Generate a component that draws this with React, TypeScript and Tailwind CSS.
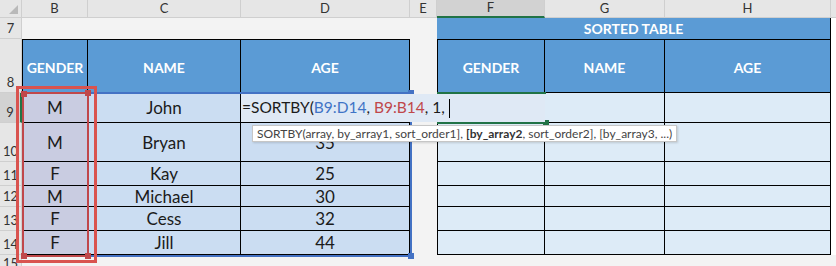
import React from "react";

const COLS = ["B", "C", "D", "E", "F", "G", "H"];

const data = [
  ["M", "John", ""],
  ["M", "Bryan", "35"],
  ["F", "Kay", "25"],
  ["M", "Michael", "30"],
  ["F", "Cess", "32"],
  ["F", "Jill", "44"],
];

const font = { fontFamily: "Lato, 'Open Sans', sans-serif" };

function Handle({ className }: { className: string }) {
  return <div className={"absolute h-[6px] w-[6px] " + className} />;
}

export default function App() {
  return (
    <div className="relative h-[266px] w-[836px] overflow-hidden bg-[#f3f3f3]" style={font}>
      <div className="grid grid-cols-[22px_66px_153px_169px_27px_108px_120px_166px_1fr] grid-rows-[18px_21px_54px_30px_39px_24px_21px_24px_24px_1fr]">
        {/* column letters */}
        <div className="relative border-b border-r border-[#cfcfcf] bg-[#e6e6e6]">
          <div className="absolute bottom-[3px] right-[3px] h-0 w-0 border-b-[9px] border-l-[9px] border-b-[#b9b9b9] border-l-transparent" />
        </div>
        {COLS.map((c) => (
          <div
            key={c}
            className={
              c === "F"
                ? "flex items-center justify-center border-b-2 border-r border-b-[#217346] border-r-[#cfcfcf] bg-[#d2d2d2] text-[13px] text-[#333]"
                : "flex items-center justify-center border-b border-r border-[#cfcfcf] bg-[#e6e6e6] text-[13px] text-[#333]"
            }
          >
            {c}
          </div>
        ))}
        <div className="border-b border-[#cfcfcf] bg-[#e6e6e6]" />

        {/* row 7 */}
        <RowHead n={7} />
        <div className="col-span-4" />
        <div className="col-span-3 flex items-center justify-center border-r border-black bg-[#5b9bd5] text-[14px] font-bold text-white">
          SORTED TABLE
        </div>
        <div className="bg-white" />

        {/* row 8 headers */}
        <RowHead n={8} />
        {["GENDER", "NAME", "AGE"].map((t, i) => (
          <div
            key={"l" + t}
            className={
              "flex items-center justify-center border-b border-r border-t border-black bg-[#5b9bd5] pt-[2px] text-[14px] font-bold text-white " +
              (i === 0 ? "border-l" : "")
            }
          >
            {t}
          </div>
        ))}
        <div />
        {["GENDER", "NAME", "AGE"].map((t, i) => (
          <div
            key={"r" + t}
            className={
              "flex items-center justify-center border-b border-r border-t border-black bg-[#5b9bd5] pt-[2px] text-[14px] font-bold text-white " +
              (i === 0 ? "border-l" : "")
            }
          >
            {t}
          </div>
        ))}
        <div className="bg-white" />

        {/* data rows */}
        {data.map((r, ri) => (
          <React.Fragment key={ri}>
            <RowHead n={9 + ri} active={ri === 0} />
            {r.map((v, ci) => (
              <div
                key={ci}
                className={
                  "flex items-center justify-center border-b border-r border-black text-[17px] leading-none text-[#1b1b1b] " +
                  (ci === 0 ? "border-l bg-[#c9cce1] " : "bg-[#cbddf2] ")
                }
              >
                {v}
              </div>
            ))}
            <div />
            {[0, 1, 2].map((k) => (
              <div
                key={"e" + k}
                className={
                  "border-b border-r border-black bg-[#ddebf7] " + (k === 0 ? "border-l" : "")
                }
              />
            ))}
            <div className="bg-white" />
          </React.Fragment>
        ))}

        {/* row 15 */}
        <RowHead n={15} />
        <div className="col-span-8" />
      </div>

      {/* active cell F9 */}
      <div className="absolute left-[437px] top-[92px] h-[32px] w-[109px] border-b-2 border-t-2 border-[#217346]">
        <Handle className="-bottom-[4px] -right-[3px] bg-[#217346]" />
      </div>

      {/* blue reference B9:D14 */}
      <div className="absolute left-[22px] top-[92px] h-[165px] w-[390px] border-2 border-[#4472c4]">
        <Handle className="-right-[4px] -top-[4px] bg-[#4472c4]" />
        <Handle className="-bottom-[4px] -right-[4px] bg-[#4472c4]" />
      </div>

      {/* editing box over D9:F9 */}
      <div className="absolute left-[241px] top-[94px] flex h-[28px] w-[304px] items-center bg-[#dfe9f5] pl-[1px] text-[15.5px] leading-none text-[#1b1b1b]">
        <span>=SORTBY(</span>
        <span className="text-[#3f74c6]">B9:D14</span>
        <span className="whitespace-pre">, </span>
        <span className="text-[#c0474a]">B9:B14</span>
        <span className="whitespace-pre">, 1, </span>
        <span className="h-[19px] w-px bg-black" />
      </div>

      {/* red reference B9:B14 */}
      <div className="absolute left-[22px] top-[92px] h-[165px] w-[67px] border-2 border-[#c0474a]">
        <Handle className="-left-[3px] -top-[3px] bg-[#c0474a]" />
        <Handle className="-right-[4px] -top-[4px] bg-[#c0474a]" />
        <Handle className="-bottom-[4px] -left-[3px] bg-[#c0474a]" />
        <Handle className="-bottom-[4px] -right-[4px] bg-[#c0474a]" />
      </div>

      {/* annotation box */}
      <div className="absolute left-[16px] top-[86px] h-[177px] w-[81px] border-[3px] border-[#d9534f]" />

      {/* tooltip */}
      <div className="absolute left-[252px] top-[125px] flex h-[17px] items-center border border-[#c6c6c6] bg-white px-[4px] text-[12px] leading-none text-[#444] shadow-[1px_1px_2px_rgba(0,0,0,0.15)]">
        SORTBY(array, by_array1, sort_order1],&nbsp;<b className="text-[#333]">[by_array2</b>, sort_order2], [by_array3, ...)
      </div>
    </div>
  );
}

function RowHead({ n, active }: { n: number; active?: boolean }) {
  return (
    <div
      className={
        "flex items-end justify-center border-b border-[#cfcfcf] pb-[1px] text-[13px] leading-[17px] text-[#333] " +
        (active ? "border-r-2 border-r-[#217346] bg-[#d2d2d2]" : "border-r border-r-[#cfcfcf] bg-[#e6e6e6]")
      }
    >
      {n}
    </div>
  );
}
